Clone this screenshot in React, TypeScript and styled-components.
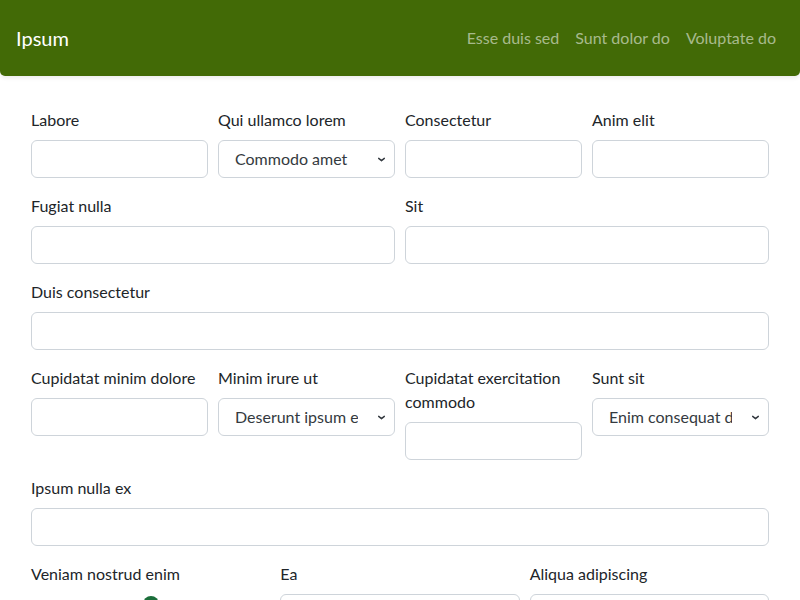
import React from "react";
import styled, { createGlobalStyle } from "styled-components";

const Global = createGlobalStyle`
  * { box-sizing: border-box; }
  body {
    margin: 0;
    background: #fff;
    color: #212529;
    font-family: "Segoe UI", Lato, "Noto Sans", sans-serif;
    font-size: 16px;
    line-height: 1.5;
  }
`;

const Nav = styled.nav`
  height: 76px;
  background: #426a06;
  border-radius: 0 0 5px 5px;
  box-shadow: 0 2px 4px rgba(0, 0, 0, 0.08);
  display: flex;
  align-items: center;
  justify-content: space-between;
  padding: 0 16px;
`;

const Brand = styled.a`
  color: #fff;
  font-size: 20px;
  font-weight: 400;
  text-decoration: none;
`;

const Links = styled.div`
  display: flex;
`;

const NavLink = styled.a`
  color: rgba(255, 255, 255, 0.55);
  padding: 0 8px;
  text-decoration: none;
`;

const Form = styled.form`
  padding: 32px 31px 0;
`;

const Row = styled.div<{ $cols: number }>`
  display: grid;
  grid-template-columns: repeat(${(p) => p.$cols}, 1fr);
  column-gap: 10px;
  margin-bottom: 16px;
  align-items: start;
`;

const Field = styled.div<{ $span?: number }>`
  grid-column: span ${(p) => p.$span ?? 1};
  display: flex;
  flex-direction: column;
  min-width: 0;
`;

const Label = styled.label`
  margin-bottom: 8px;
`;

const Input = styled.input`
  height: 38px;
  width: 100%;
  border: 1px solid #ced4da;
  border-radius: 6px;
  padding: 6px 12px;
  font: inherit;
  color: #212529;
  background: #fff;
`;

const Select = styled.select`
  height: 38px;
  width: 100%;
  border: 1px solid #ced4da;
  border-radius: 6px;
  padding: 6px 36px 6px 16px;
  font: inherit;
  color: #343a40;
  appearance: none;
  background: #fff
    url("data:image/svg+xml,%3csvg xmlns='http://www.w3.org/2000/svg' viewBox='0 0 16 16'%3e%3cpath fill='none' stroke='%23343a40' stroke-linecap='round' stroke-linejoin='round' stroke-width='2.6' d='m3 6 5 4 5-4'/%3e%3c/svg%3e")
    no-repeat right 8px center / 9px 9px;
`;

const Range = styled.input`
  width: 100%;
  height: 24px;
  margin: 0;
  padding: 0;
  appearance: none;
  background: transparent;
  &::-webkit-slider-runnable-track {
    height: 8px;
    background: #dee2e6;
    border-radius: 16px;
  }
  &::-webkit-slider-thumb {
    appearance: none;
    width: 16px;
    height: 16px;
    margin-top: -6px;
    border-radius: 50%;
    background: #1b6e3a;
    border: 0;
  }
`;

export default function App() {
  return (
    <>
      <Global />
      <Nav>
        <Brand href="#">Ipsum</Brand>
        <Links>
          <NavLink href="#">Esse duis sed</NavLink>
          <NavLink href="#">Sunt dolor do</NavLink>
          <NavLink href="#">Voluptate do</NavLink>
        </Links>
      </Nav>
      <Form>
        <Row $cols={4}>
          <Field>
            <Label>Labore</Label>
            <Input />
          </Field>
          <Field>
            <Label>Qui ullamco lorem</Label>
            <Select defaultValue="a">
              <option value="a">Commodo amet</option>
            </Select>
          </Field>
          <Field>
            <Label>Consectetur</Label>
            <Input />
          </Field>
          <Field>
            <Label>Anim elit</Label>
            <Input />
          </Field>
        </Row>
        <Row $cols={4}>
          <Field $span={2}>
            <Label>Fugiat nulla</Label>
            <Input />
          </Field>
          <Field $span={2}>
            <Label>Sit</Label>
            <Input />
          </Field>
        </Row>
        <Row $cols={1}>
          <Field>
            <Label>Duis consectetur</Label>
            <Input />
          </Field>
        </Row>
        <Row $cols={4}>
          <Field>
            <Label>Cupidatat minim dolore</Label>
            <Input />
          </Field>
          <Field>
            <Label>Minim irure ut</Label>
            <Select defaultValue="a">
              <option value="a">Deserunt ipsum et</option>
            </Select>
          </Field>
          <Field>
            <Label>Cupidatat exercitation commodo</Label>
            <Input />
          </Field>
          <Field>
            <Label>Sunt sit</Label>
            <Select defaultValue="a">
              <option value="a">Enim consequat dolor</option>
            </Select>
          </Field>
        </Row>
        <Row $cols={1}>
          <Field>
            <Label>Ipsum nulla ex</Label>
            <Input />
          </Field>
        </Row>
        <Row $cols={3}>
          <Field>
            <Label>Veniam nostrud enim</Label>
            <Range type="range" defaultValue={50} />
          </Field>
          <Field>
            <Label>Ea</Label>
            <Input />
          </Field>
          <Field>
            <Label>Aliqua adipiscing</Label>
            <Input />
          </Field>
        </Row>
      </Form>
    </>
  );
}
